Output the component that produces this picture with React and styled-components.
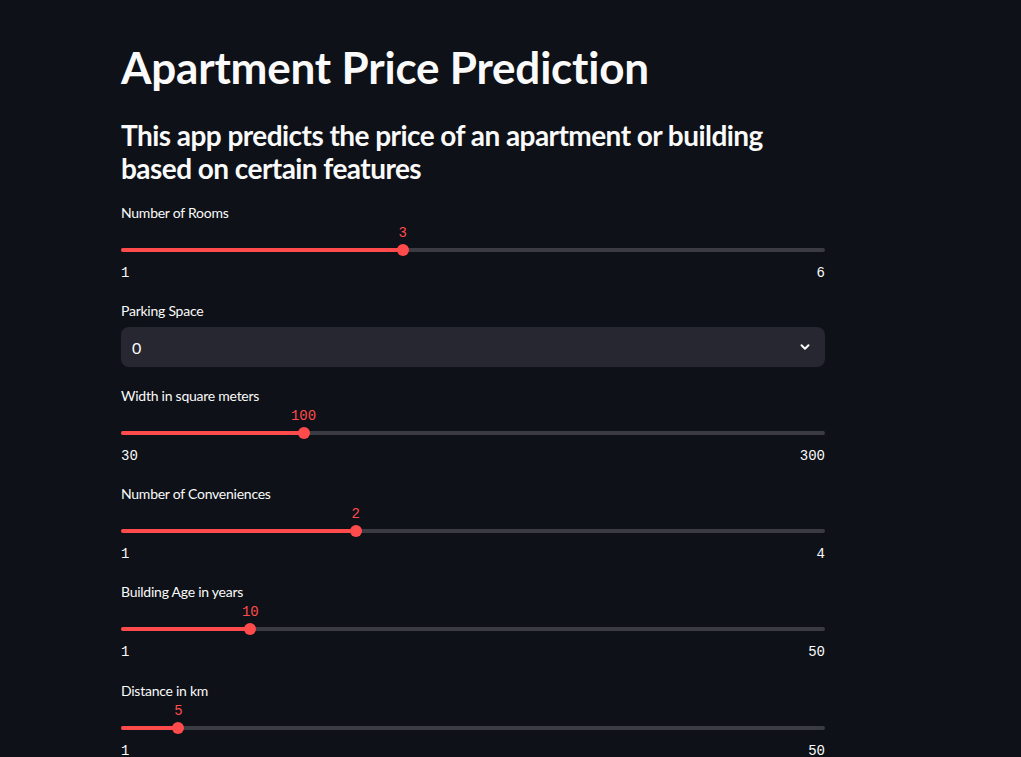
import React from 'react';
import styled, { createGlobalStyle } from 'styled-components';

const GlobalStyle = createGlobalStyle`
  html, body {
    margin: 0;
    padding: 0;
    background: #0e1117;
  }
  body {
    font-family: Lato, "Open Sans", sans-serif;
    color: #fafafa;
    overflow: hidden;
  }
`;

const Page = styled.div`
  width: 1021px;
  height: 757px;
  background: #0e1117;
  overflow: hidden;
`;

const Main = styled.main`
  width: 704px;
  margin-left: 121px;
  padding-top: 41px;
  display: flex;
  flex-direction: column;
`;

const Title = styled.h1`
  margin: 0;
  font-size: 44px;
  font-weight: 700;
  line-height: 53px;
  letter-spacing: -0.2px;
`;

const Subtitle = styled.h2`
  margin: 25px 0 18px;
  font-size: 28px;
  font-weight: 700;
  line-height: 33px;
  width: 660px;
  letter-spacing: -0.55px;
`;

const Widget = styled.div`
  display: flex;
  flex-direction: column;
  margin-bottom: ${(p) => p.$gap || 19.3}px;
`;

const Label = styled.label`
  font-size: 14px;
  line-height: 20px;
  height: 20px;
  letter-spacing: -0.25px;
`;

const Track = styled.div`
  position: relative;
  margin-top: 25px;
  height: 4px;
  border-radius: 2px;
  background: #3a3b43;
`;

const Fill = styled.div`
  height: 100%;
  border-radius: 2px;
  background: #ff4b4b;
`;

const Thumb = styled.div`
  position: absolute;
  top: -4px;
  width: 12px;
  height: 12px;
  margin-left: -6px;
  border-radius: 50%;
  background: #ff4b4b;
`;

const ThumbValue = styled.div`
  position: absolute;
  top: -24px;
  transform: translateX(-50%);
  font-family: "Liberation Mono", "DejaVu Sans Mono", monospace;
  font-size: 14px;
  line-height: 18px;
  color: #ff4b4b;
  white-space: nowrap;
`;

const Ticks = styled.div`
  display: flex;
  justify-content: space-between;
  margin-top: 12px;
  font-family: "Liberation Mono", "DejaVu Sans Mono", monospace;
  font-size: 14px;
  line-height: 18px;
`;

const SelectBox = styled.div`
  margin-top: 6px;
  height: 40px;
  border-radius: 8px;
  background: #262730;
  display: flex;
  align-items: center;
  justify-content: space-between;
  padding: 0 14px 0 11px;
  font-size: 16px;
`;

const Chevron = () => (
  <svg width="12" height="12" viewBox="0 0 12 12" fill="none">
    <path d="M2.5 4.2 L6 7.7 L9.5 4.2" stroke="#fafafa" strokeWidth="2" strokeLinecap="round" strokeLinejoin="round" />
  </svg>
);

const Slider = ({ label, min, max, value }) => {
  const pct = ((value - min) / (max - min)) * 100;
  return (
    <Widget>
      <Label>{label}</Label>
      <Track>
        <Fill style={{ width: `${pct}%` }} />
        <Thumb style={{ left: `${pct}%` }} />
        <ThumbValue style={{ left: `${pct}%` }}>{value}</ThumbValue>
      </Track>
      <Ticks>
        <span>{min}</span>
        <span>{max}</span>
      </Ticks>
    </Widget>
  );
};

const Select = ({ label, value }) => (
  <Widget $gap={18.4}>
    <Label>{label}</Label>
    <SelectBox>
      <span>{value}</span>
      <Chevron />
    </SelectBox>
  </Widget>
);

export default function App() {
  return (
    <Page>
      <GlobalStyle />
      <Main>
        <Title>Apartment Price Prediction</Title>
        <Subtitle>This app predicts the price of an apartment or building based on certain features</Subtitle>
        <Slider label="Number of Rooms" min={1} max={6} value={3} />
        <Select label="Parking Space" value="0" />
        <Slider label="Width in square meters" min={30} max={300} value={100} />
        <Slider label="Number of Conveniences" min={1} max={4} value={2} />
        <Slider label="Building Age in years" min={1} max={50} value={10} />
        <Slider label="Distance in km" min={1} max={50} value={5} />
      </Main>
    </Page>
  );
}
